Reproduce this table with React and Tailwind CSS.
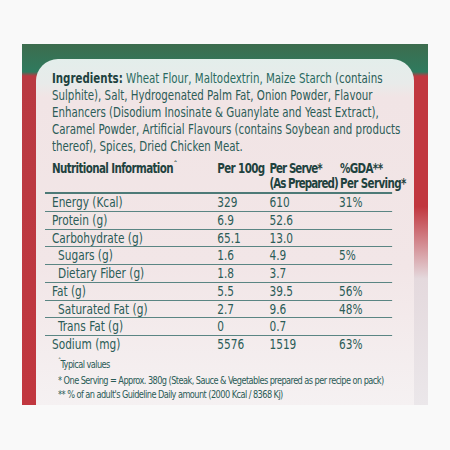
export default function App() {
  const font = { fontFamily: '"DejaVu Sans Condensed", "Liberation Sans", sans-serif' };
  const rows = [
    { l: "Energy (Kcal)", a: "329", b: "610", c: "31%" },
    { l: "Protein (g)", a: "6.9", b: "52.6", c: "" },
    { l: "Carbohydrate (g)", a: "65.1", b: "13.0", c: "" },
    { l: "Sugars (g)", a: "1.6", b: "4.9", c: "5%", sub: true },
    { l: "Dietary Fiber (g)", a: "1.8", b: "3.7", c: "", sub: true },
    { l: "Fat (g)", a: "5.5", b: "39.5", c: "56%" },
    { l: "Saturated Fat (g)", a: "2.7", b: "9.6", c: "48%", sub: true },
    { l: "Trans Fat (g)", a: "0", b: "0.7", c: "", sub: true },
    { l: "Sodium (mg)", a: "5576", b: "1519", c: "63%", last: true },
  ];
  return (
    <div className="w-[450px] h-[450px] bg-[#f9f9f9] pt-[44px] pl-[22px]" style={font}>
      <div className="w-[406px] h-[361px] flex bg-[linear-gradient(to_bottom,#3d6c4e_0px,#2f7a5e_28px,#b93a42_32px,#c1373f_100%)]">
        <div className="w-[14px] shrink-0 h-full" />
        <div className="flex-1 min-w-0 overflow-hidden mt-[15px] rounded-t-[22px] bg-[linear-gradient(to_bottom,#e3eeeb_0px,#e8ebea_24px,#f1e4e5_38px,#f2e6e7_60%,#f5f1f2_100%)] pt-[11px] text-[#2b5c57]">
          <div className="ml-[16px] w-[440px] origin-left scale-x-[0.845] text-[13.5px] leading-[17px] whitespace-nowrap">
            <div><span className="font-bold text-[#1e423e]">Ingredients:</span> <span className="text-[#2a6a60]">Wheat Flour, Maltodextrin, Maize Starch</span> (contains</div>
            <div>Sulphite), Salt, Hydrogenated Palm Fat, Onion Powder, Flavour</div>
            <div>Enhancers (Disodium Inosinate &amp; Guanylate and Yeast Extract),</div>
            <div>Caramel Powder, Artificial Flavours (contains Soybean and products</div>
            <div>thereof), Spices, Dried Chicken Meat.</div>
          </div>
          <div className="ml-[9px] w-[399px] mt-[6px] origin-left scale-x-[0.87] text-[13.5px] whitespace-nowrap">
            <div className="grid grid-cols-[198px_60px_80px_1fr] border-b-2 border-[#4d7a77] pb-[1px] font-bold text-[#1f423e] leading-[15px] text-[13.2px] tracking-[-0.7px]">
              <div className="pl-[8px]">Nutritional Information<span className="relative top-[-5px] text-[9px] ml-[1px]">ˆ</span></div>
              <div>Per 100g</div>
              <div className="tracking-[-1.1px]">Per Serve*<br />(As Prepared)</div>
              <div className="pl-[1px]">%GDA**<br />Per Serving*</div>
            </div>
            {rows.map((r, i) => (
              <div
                key={i}
                className={`grid grid-cols-[198px_60px_80px_1fr] h-[17.75px] leading-[17px] ${r.last ? "" : "border-b-[1.5px] border-[#5a8583]"}`}
              >
                <div className={r.sub ? "pl-[15px]" : "pl-[8px]"}>{r.l}</div>
                <div>{r.a}</div>
                <div>{r.b}</div>
                <div>{r.c}</div>
              </div>
            ))}
          </div>
          <div className="ml-[22px] mt-[3px] w-[440px] origin-left scale-x-[0.87] text-[10.5px] leading-[14px] whitespace-nowrap tracking-[-0.65px]">
            <div><span className="relative top-[-3px] text-[8px]">ˆ</span>Typical values</div>
            <div>* One Serving = Approx. 380g (Steak, Sauce &amp; Vegetables prepared as per recipe on pack)</div>
            <div>** % of an adult's Guideline Daily amount (2000 Kcal / 8368 Kj)</div>
          </div>
        </div>
        <div className="w-[14px] shrink-0 h-full bg-[linear-gradient(to_bottom,transparent_0px,transparent_32px,#c1373f_33px,#c1373f_45%,#e4d9dd_65%,#ebe7ea_100%)]" />
      </div>
    </div>
  );
}
